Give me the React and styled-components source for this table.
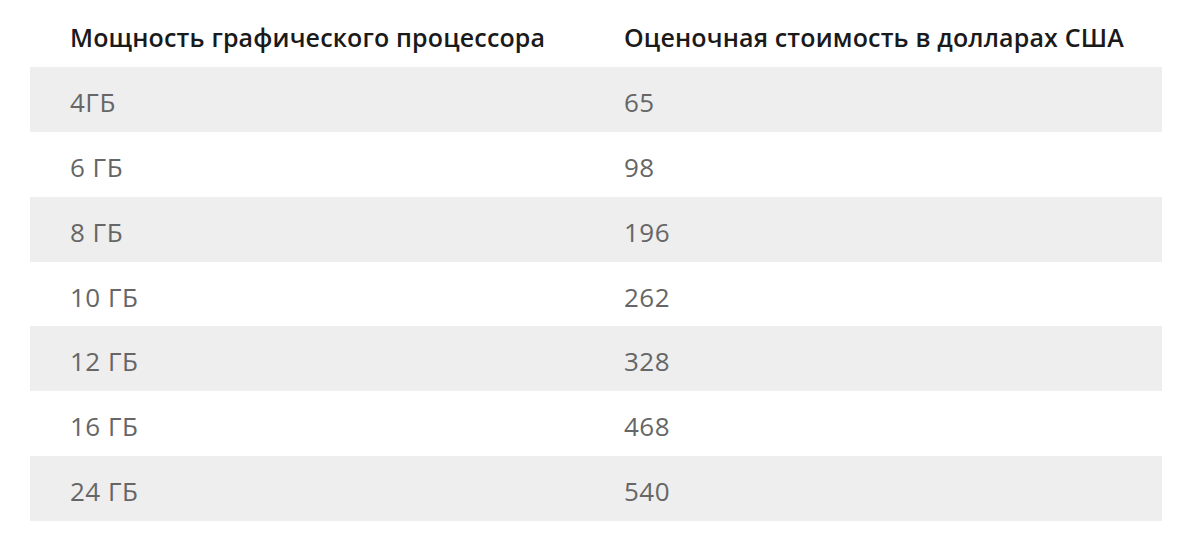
import styled, { createGlobalStyle } from 'styled-components';

const GlobalStyle = createGlobalStyle`
    body {
        margin: 0;
        background: #ffffff;
        font-family: 'Open Sans', Roboto, 'Liberation Sans', sans-serif;
    }
`

const rows = [
    ['4ГБ', '65'],
    ['6 ГБ', '98'],
    ['8 ГБ', '196'],
    ['10 ГБ', '262'],
    ['12 ГБ', '328'],
    ['16 ГБ', '468'],
    ['24 ГБ', '540'],
];

export default function App(){
    return(
        <Page>
            <GlobalStyle />
            <Table>
                <thead>
                    <tr>
                        <HeadCell>Мощность графического процессора</HeadCell>
                        <HeadCell>Оценочная стоимость в долларах США</HeadCell>
                    </tr>
                </thead>
                <tbody>
                    {rows.map((r, i) => (
                        <Row key={i} $striped={i % 2 === 0}>
                            <Cell>{r[0]}</Cell>
                            <Cell>{r[1]}</Cell>
                        </Row>
                    ))}
                </tbody>
            </Table>
        </Page>
    )
}

const Page = styled.div`
    padding: 0 38px 0 30px;
`
const Table = styled.table`
    width: 100%;
    border-collapse: collapse;
    table-layout: fixed;
`
const HeadCell = styled.th`
    text-align: left;
    font-weight: 600;
    font-size: 25px;
    letter-spacing: 0.15px;
    color: #1a1a1a;
    height: 61px;
    padding: 6px 0 0 40px;
    vertical-align: middle;
    white-space: nowrap;
    &:first-child{ width: 514px; }
`
const Row = styled.tr`
    background: ${props => props.$striped ? '#eeeeee' : '#ffffff'};
    height: 64.86px;
`
const Cell = styled.td`
    font-size: 26px;
    letter-spacing: 0.5px;
    color: #666666;
    padding: 5px 0 0 40px;
    vertical-align: middle;
`
